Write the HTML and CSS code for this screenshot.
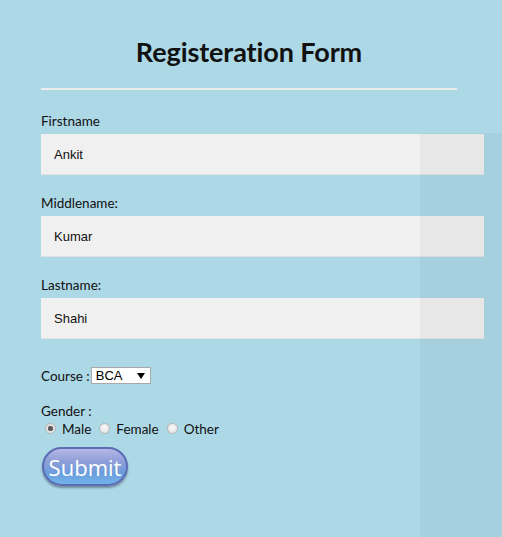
FILE: index.html
```html
<!DOCTYPE html>
<html>
<head>
<meta charset="utf-8">
<link rel="stylesheet" href="styles.css">
</head>
<body>
<div class="page">
  <form class="form">
    <h1 class="title">Registeration Form</h1>
    <hr class="rule">
    <div class="field">
      <label class="label">Firstname</label>
      <input class="text" type="text" value="Ankit">
    </div>
    <div class="field">
      <label class="label">Middlename:</label>
      <input class="text" type="text" value="Kumar">
    </div>
    <div class="field">
      <label class="label">Lastname:</label>
      <input class="text" type="text" value="Shahi">
    </div>
    <div class="course">
      <span class="label">Course :</span>
      <select class="select"><option>BCA</option></select>
    </div>
    <div class="gender">
      <span class="label">Gender :</span>
      <div class="radios">
        <label class="opt"><input class="radio" type="radio" name="g" checked> Male</label>
        <label class="opt"><input class="radio" type="radio" name="g"> Female</label>
        <label class="opt"><input class="radio" type="radio" name="g"> Other</label>
      </div>
    </div>
    <button class="submit" type="button">Submit</button>
  </form>
  <div class="shade"></div>
  <div class="edge"></div>
</div>
</body>
</html>
```
FILE: styles.css
```css
html, body {
  margin: 0;
  padding: 0;
  background: #add8e6;
  height: 100%;
}
.page {
  position: relative;
  width: 507px;
  height: 537px;
  overflow: hidden;
  font-family: "Lato", "Open Sans", sans-serif;
  color: #111;
}
.form {
  width: 416px;
  margin: 0;
  padding: 36px 0 0 41px;
}
.title {
  margin: 0;
  text-align: center;
  font-size: 27px;
  font-weight: 700;
  line-height: 32px;
  letter-spacing: -0.1px;
}
.rule {
  margin: 20px 0 0 0;
  border: 0;
  height: 2px;
  background: #ececec;
}
.field {
  display: flex;
  flex-direction: column;
  margin-top: 23px;
}
.field + .field {
  margin-top: 20px;
}
.label {
  font-size: 13.5px;
  line-height: 16px;
  margin-bottom: 5px;
}
.text {
  width: 443px;
  height: 41px;
  box-sizing: border-box;
  border: 0;
  border-bottom: 1px solid #e2e2e2;
  background: #f0f0f0;
  padding: 0 13px;
  font-family: "Liberation Sans", Arial, sans-serif;
  font-size: 13px;
  color: #111;
  outline: none;
}
.course {
  margin-top: 28px;
  display: flex;
  align-items: center;
  gap: 1px;
}
.course .label {
  margin: 0;
}
.select {
  appearance: none;
  -webkit-appearance: none;
  width: 60px;
  height: 17px;
  box-sizing: border-box;
  border: 1px solid #a9a9a9;
  background: #fff url("data:image/svg+xml;utf8,<svg xmlns='http://www.w3.org/2000/svg' width='8' height='6'><path d='M0 0H8L4 6Z' fill='black'/></svg>") no-repeat right 5px center;
  padding: 0 0 0 4px;
  font-family: "Liberation Sans", Arial, sans-serif;
  font-size: 13px;
  line-height: 15px;
  color: #000;
  border-radius: 0;
}
.gender {
  margin-top: 19px;
}
.gender .label {
  display: block;
  margin: 0;
}
.radios {
  display: flex;
  gap: 8px;
  margin-top: 2px;
  padding-left: 4px;
}
.opt {
  display: flex;
  align-items: center;
  gap: 6px;
  font-size: 13.5px;
  line-height: 16px;
}
.radio {
  appearance: none;
  -webkit-appearance: none;
  margin: 0;
  width: 11px;
  height: 11px;
  border-radius: 50%;
  border: 1px solid #b5b5b5;
  background: radial-gradient(circle at 50% 40%, #fafafa 0%, #dcdcdc 100%);
  position: relative;
  top: -1px;
}
.radio:checked {
  background: radial-gradient(circle, #555 0, #666 2.5px, #e6e6e6 3px, #d8d8d8 100%);
}
.submit {
  margin: 10px 0 0 1px;
  width: 86px;
  height: 39px;
  border-radius: 20px;
  border: 2px solid #5a6cb4;
  background: linear-gradient(to bottom, #b4b8e6 0%, #8f9ed8 35%, #6a9ddc 70%, #72b4ea 100%);
  box-shadow: 0 2px 2px rgba(60, 70, 90, 0.5);
  color: #fff;
  font-family: "Open Sans", "Lato", sans-serif;
  font-size: 22px;
  line-height: 30px;
  padding: 0;
}
.shade {
  position: absolute;
  left: 420px;
  top: 133px;
  width: 87px;
  bottom: 0;
  background: rgba(0, 0, 0, 0.035);
}
.edge {
  position: absolute;
  right: 0;
  top: 0;
  width: 5px;
  height: 100%;
  background: #fcc3cb;
}
```
